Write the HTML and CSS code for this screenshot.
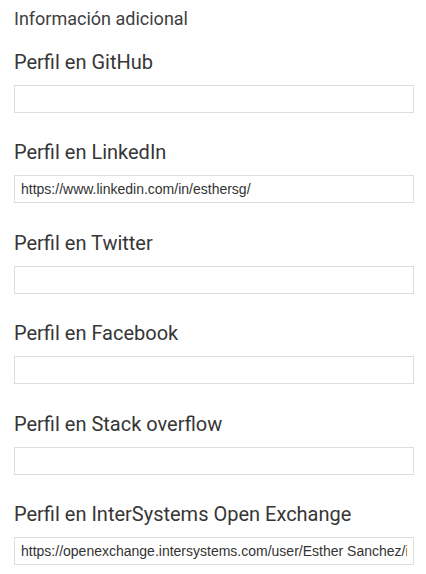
FILE: index.html
```html
<!DOCTYPE html>
<html lang="es">
<head>
<meta charset="utf-8">
<title>Información adicional</title>
<link rel="stylesheet" href="styles.css">
</head>
<body>
<form class="form">
  <div class="section-title">Información adicional</div>
  <div class="field">
    <label class="label" for="gh">Perfil en GitHub</label>
    <input class="input" id="gh" type="text" value="">
  </div>
  <div class="field">
    <label class="label" for="li">Perfil en LinkedIn</label>
    <input class="input" id="li" type="text" value="https://www.linkedin.com/in/esthersg/">
  </div>
  <div class="field">
    <label class="label" for="tw">Perfil en Twitter</label>
    <input class="input" id="tw" type="text" value="">
  </div>
  <div class="field">
    <label class="label" for="fb">Perfil en Facebook</label>
    <input class="input" id="fb" type="text" value="">
  </div>
  <div class="field">
    <label class="label" for="so">Perfil en Stack overflow</label>
    <input class="input" id="so" type="text" value="">
  </div>
  <div class="field">
    <label class="label" for="oe">Perfil en InterSystems Open Exchange</label>
    <input class="input" id="oe" type="text" value="https://openexchange.intersystems.com/user/Esther Sanchez/iJ8mWq0Zl1">
  </div>
</form>
</body>
</html>
```
FILE: styles.css
```css
html, body {
  margin: 0;
  padding: 0;
  background: #ffffff;
}
.form {
  display: flex;
  flex-direction: column;
  padding: 8px 12px 0 14px;
  font-family: Roboto, "Liberation Sans", sans-serif;
}
.section-title {
  font-size: 18px;
  line-height: 21px;
  color: #404040;
  margin-bottom: 22px;
}
.field {
  display: flex;
  flex-direction: column;
  gap: 11px;
  margin-bottom: 28.4px;
}
.label {
  font-size: 20px;
  line-height: 23px;
  color: #363636;
}
.input {
  box-sizing: border-box;
  width: 400px;
  height: 28px;
  margin: 0;
  border: 1px solid #dddddd;
  border-radius: 0;
  padding: 0 6px;
  font-family: "Liberation Sans", Arial, sans-serif;
  font-size: 14px;
  color: #333333;
  background: #ffffff;
  outline: none;
}
```
